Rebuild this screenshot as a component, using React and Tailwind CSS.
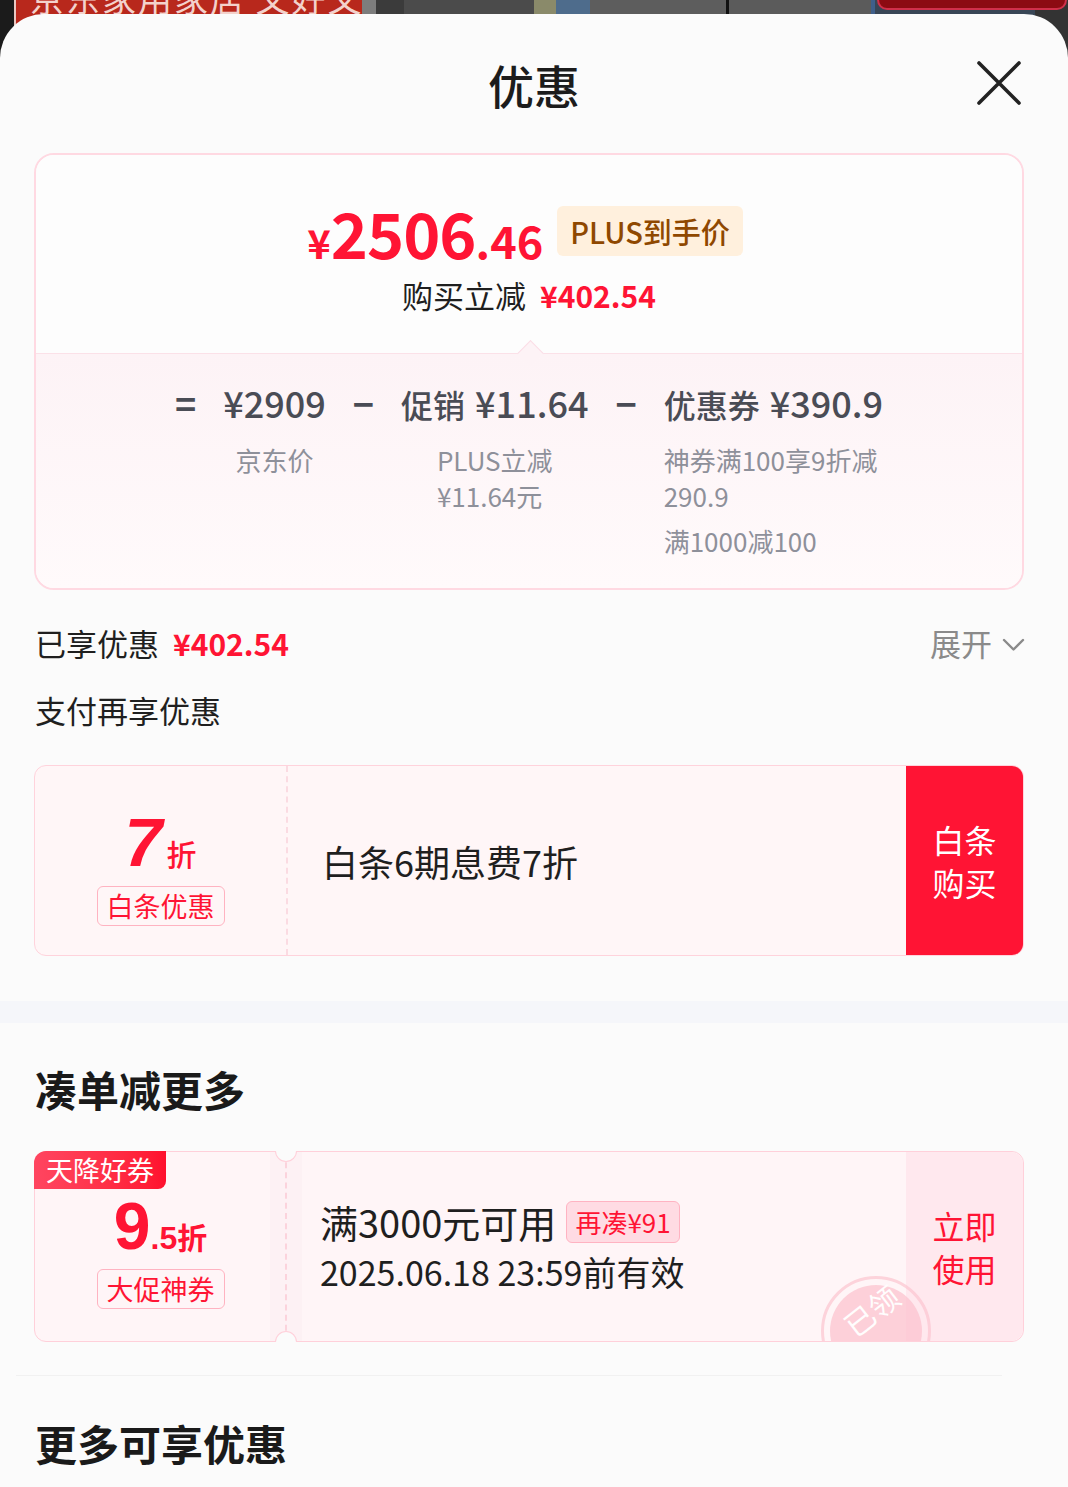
export default function App() {
  return (
    <div className="w-[1068px] h-[1487px] overflow-hidden bg-[#fbfbfb] font-['Noto_Sans_CJK_SC',sans-serif] text-[#1f1f1f]">
      {/* background strip (photo behind the sheet) */}
      <div className="h-[60px] flex">
        <div className="w-[14px] bg-[#1b1b1b]" />
        <div className="w-[348px] bg-[#b8281c] overflow-hidden border-l-2 border-[#e9c8c2]">
          <div className="-mt-[22px] pl-[14px] text-[34px] leading-[40px] text-[#f3d2cc] whitespace-nowrap tracking-[2px]">京东家用家居 又好又便宜</div>
        </div>
        <div className="w-[14px] bg-[#7d7d7d]" />
        <div className="w-[28px] bg-[#3b3b3b]" />
        <div className="w-[130px] bg-[#4b4b4b]" />
        <div className="w-[22px] bg-[#8a8a6a]" />
        <div className="w-[34px] bg-[#4e6c8c]" />
        <div className="w-[136px] bg-[#5d5d5d]" />
        <div className="w-[3px] bg-[#111]" />
        <div className="w-[142px] bg-[#5b5b5b]" />
        <div className="w-[4px] bg-[#3f5f8a]" />
        <div className="w-[160px] bg-[#384656] relative">
          <div className="absolute left-[2px] top-[-14px] w-[190px] h-[24px] rounded-[10px] bg-[#8c0b12] border-2 border-[#d0304a]" />
        </div>
        <div className="flex-1 bg-[#333333]" />
      </div>

      {/* sheet */}
      <div className="relative -mt-[46px] bg-[#fbfbfb] rounded-t-[44px] h-[1473px]">
        {/* header */}
        <div className="relative h-[139px] flex items-center justify-center">
          <h1 className="text-[46px] leading-none font-medium text-[#1c1c1c]">优惠</h1>
          <svg className="absolute right-[46px] top-[46px]" width="46" height="46" viewBox="0 0 46 46" fill="none">
            <path d="M3 3 L43 43 M43 3 L3 43" stroke="#222" strokeWidth="3.6" strokeLinecap="round" />
          </svg>
        </div>

        {/* summary card */}
        <div className="ml-[34px] w-[990px] rounded-[20px] border-2 border-[#ffd9e2] overflow-hidden">
          <div className="h-[198px] bg-[#fdfdfd] flex flex-col items-center pt-[48px]">
            <div className="flex items-center h-[56px] -ml-[8px]">
              <div className="flex items-baseline text-[#ff1434] font-bold leading-none">
                <span className="text-[40px]">¥</span>
                <span className="text-[63px] tracking-[-1px]">2506</span>
                <span className="text-[45px]">.46</span>
              </div>
              <div className="ml-[14px] h-[50px] px-[13px] rounded-[6px] bg-[#fff0dd] text-[#8f4800] text-[29px] leading-[50px] font-medium">PLUS到手价</div>
            </div>
            <div className="mt-[16px] h-[40px] flex items-center text-[31px] leading-[40px] text-[#1f1f1f]">
              <span>购买立减</span>
              <span className="ml-[14px] text-[#ff1434] font-bold text-[30px]">¥402.54</span>
            </div>
          </div>
          <div className="relative h-[235px] border-t border-[#fbe1e8] bg-gradient-to-b from-[#fdf3f6] to-[#fffafb] pt-[26px]">
            <div className="absolute left-[485px] top-[-10px] w-[19px] h-[19px] rotate-45 bg-[#fdf3f6] border-l border-t border-[#fbdde6]" />
            <div className="flex justify-center items-start gap-[27px] text-[#4a4c55]">
              <span className="text-[36px] leading-[44px] font-bold">=</span>
              <div className="flex flex-col items-center">
                <span className="h-[44px] text-[36px] leading-[44px] font-medium whitespace-nowrap">¥2909</span>
                <span className="mt-[18px] text-[26px] leading-[36px] text-[#8e909a]">京东价</span>
              </div>
              <span className="text-[36px] leading-[44px] font-bold">−</span>
              <div className="flex flex-col items-center">
                <div className="h-[44px] flex items-baseline font-medium whitespace-nowrap leading-[44px]">
                  <span className="text-[32px]">促销</span>
                  <span className="ml-[10px] text-[36px]">¥11.64</span>
                </div>
                <div className="mt-[18px] text-[26px] leading-[36px] text-[#8e909a] text-left">
                  <div>PLUS立减</div>
                  <div>¥11.64元</div>
                </div>
              </div>
              <span className="text-[36px] leading-[44px] font-bold">−</span>
              <div className="flex flex-col items-start">
                <div className="h-[44px] flex items-baseline font-medium whitespace-nowrap leading-[44px]">
                  <span className="text-[32px]">优惠券</span>
                  <span className="ml-[10px] text-[36px]">¥390.9</span>
                </div>
                <div className="mt-[18px] text-[26px] leading-[36px] text-[#8e909a]">
                  <div>神券满100享9折减</div>
                  <div>290.9</div>
                </div>
                <div className="mt-[9px] text-[26px] leading-[36px] text-[#8e909a]">满1000减100</div>
              </div>
            </div>
          </div>
        </div>

        {/* enjoyed */}
        <div className="mt-[33px] h-[40px] pl-[35px] pr-[43px] flex items-center justify-between">
          <div className="flex items-center text-[31px] leading-[40px]">
            <span>已享优惠</span>
            <span className="ml-[14px] text-[#ff1434] font-bold text-[30px]">¥402.54</span>
          </div>
          <div className="flex items-center text-[31px] text-[#8a8a8a]">
            <span>展开</span>
            <svg className="ml-[10px] mt-[4px]" width="23" height="14" viewBox="0 0 23 14" fill="none">
              <path d="M2 2 L11.5 11.5 L21 2" stroke="#8a8a8a" strokeWidth="2.4" strokeLinecap="round" strokeLinejoin="round" />
            </svg>
          </div>
        </div>
        <div className="mt-[27px] pl-[35px] text-[31px] leading-[40px]">支付再享优惠</div>

        {/* baitiao card */}
        <div className="mt-[35px] ml-[34px] w-[990px] h-[191px] rounded-[12px] border border-[#ffd3dc] bg-[#fff6f7] flex overflow-hidden">
          <div className="w-[251px] flex flex-col items-center justify-center pt-[12px]">
            <div className="flex items-baseline text-[#ff1434] leading-none">
              <span className="text-[68px] font-black italic font-['Liberation_Sans','Noto_Sans_CJK_SC',sans-serif]">7</span>
              <span className="ml-[4px] text-[30px] font-medium">折</span>
            </div>
            <div className="mt-[10px] h-[40px] px-[9px] border border-[#ffb3c1] rounded-[6px] text-[27px] leading-[38px] text-[#ff1434]">白条优惠</div>
          </div>
          <div className="border-l-2 border-dashed border-[#fbdbe2]" />
          <div className="flex-1 flex items-center pl-[34px] text-[36px] text-[#1f1f1f]">白条6期息费7折</div>
          <div className="w-[117px] bg-[#ff1434] flex flex-col items-center justify-center text-white text-[32px] leading-[43px]">
            <span>白条</span>
            <span>购买</span>
          </div>
        </div>

        <div className="mt-[45px] h-[22px] bg-[#f5f6fa]" />

        <div className="mt-[42px] pl-[35px] text-[42px] leading-[48px] font-bold text-[#1a1a1a]">凑单减更多</div>

        {/* coupon card */}
        <div className="relative mt-[38px] ml-[34px] w-[990px] h-[191px] rounded-[12px] border border-[#ffd0da] bg-[#fff5f7] flex">
          <div className="w-[251px] flex flex-col items-center justify-center pt-[8px] rounded-l-[12px]">
            <div className="flex items-baseline text-[#ff1434] leading-none font-bold">
              <span className="text-[66px] font-['Liberation_Sans','Noto_Sans_CJK_SC',sans-serif]">9</span>
              <span className="text-[32px] font-['Liberation_Sans','Noto_Sans_CJK_SC',sans-serif]">.5</span>
              <span className="text-[30px]">折</span>
            </div>
            <div className="mt-[10px] h-[40px] px-[9px] border border-[#ffb3c1] rounded-[6px] text-[27px] leading-[38px] text-[#ff1434]">大促神券</div>
          </div>
          <div className="w-[32px] -ml-[16px] bg-[#fdf1f4] flex justify-center">
            <div className="border-l-2 border-dashed border-[#fbd3dc]" />
          </div>
          <div className="flex-1 flex flex-col justify-center pl-[18px]">
            <div className="flex items-center h-[50px]">
              <span className="text-[38px] text-[#1f1f1f]">满3000元可用</span>
              <span className="ml-[10px] h-[42px] px-[8px] rounded-[6px] border border-[#ffb3c2] bg-[#ffdbe3] text-[26px] leading-[40px] text-[#ff1434]">再凑¥91</span>
            </div>
            <div className="h-[50px] flex items-center text-[34px] text-[#1f1f1f]">2025.06.18 23:59前有效</div>
          </div>
          <div className="w-[117px] rounded-r-[12px] bg-[#ffe8ee] flex flex-col items-center justify-center text-[#ff1434] text-[32px] leading-[43px]">
            <span>立即</span>
            <span>使用</span>
          </div>

          {/* stamp */}
          <div className="absolute inset-0 overflow-hidden rounded-[12px] pointer-events-none">
            <div className="absolute left-[786px] top-[124px] w-[110px] h-[110px] rounded-full border-[3px] border-[#fcc7d2] opacity-[0.75] flex items-center justify-center">
              <div className="w-[92px] h-[92px] rounded-full bg-[#fcc3cf] flex items-start justify-center pt-[10px]">
                <span className="rotate-[-38deg] text-[30px] leading-none text-white -ml-[10px]">已领</span>
              </div>
            </div>
          </div>

          {/* ticket notches */}
          <div className="absolute left-[240px] top-[-1px] w-[22px] h-[11px] rounded-b-full bg-[#fbfbfb] border border-t-0 border-[#ffd0da]" />
          <div className="absolute left-[240px] bottom-[-1px] w-[22px] h-[11px] rounded-t-full bg-[#fbfbfb] border border-b-0 border-[#ffd0da]" />

          {/* tag */}
          <div className="absolute left-[-1px] top-[-1px] w-[132px] h-[38px] rounded-tl-[12px] rounded-br-[8px] bg-gradient-to-r from-[#ff4560] to-[#ff0f2d] text-white text-[27px] leading-[38px] text-center">天降好券</div>
        </div>

        <div className="mt-[33px] ml-[16px] w-[986px] h-px bg-[#f1f1f1]" />
        <div className="mt-[43px] pl-[35px] text-[42px] leading-[48px] font-bold text-[#1a1a1a]">更多可享优惠</div>
      </div>
    </div>
  );
}
